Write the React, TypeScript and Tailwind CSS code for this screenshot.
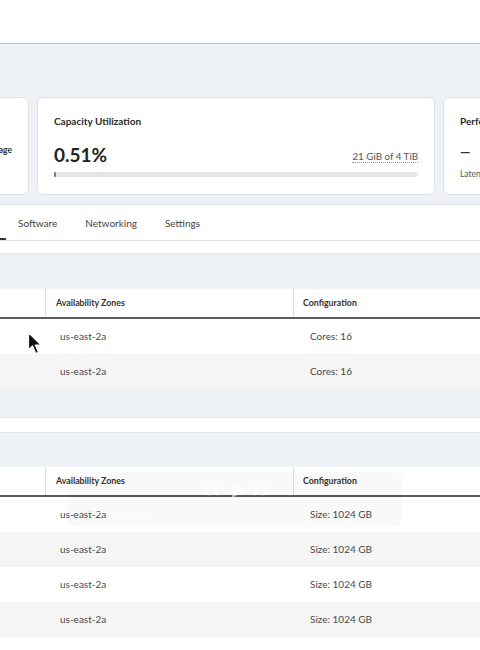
import React from "react";

const font = { fontFamily: "Lato, 'Noto Sans', sans-serif" };

function Cursor() {
  return (
    <svg
      className="absolute left-[27px] top-[331px]"
      width="16"
      height="25"
      viewBox="0 0 16 25"
    >
      <path
        d="M1.5 1.5 L1.5 19 L5.5 15 L8.8 22.5 L11.5 21.3 L8.3 14 L14 14 Z"
        fill="#111"
        stroke="#fff"
        strokeWidth="1.2"
        strokeLinejoin="round"
      />
    </svg>
  );
}

function TableHeader() {
  return (
    <div className="flex h-[30px] bg-white border-b-2 border-[#5b5b5b] text-[8.8px] font-bold text-[#333]">
      <div className="w-[45px] shrink-0" />
      <div className="w-[248px] shrink-0 border-l border-[#dedede] flex items-center pl-[10px]">
        Availability Zones
      </div>
      <div className="flex-1 border-l border-[#dedede] flex items-center pl-[9px]">
        Configuration
      </div>
    </div>
  );
}

function Row({ zone, config, striped }: { zone: string; config: string; striped: boolean }) {
  return (
    <div
      className={
        "flex h-[35px] items-center text-[10px] text-[#4a4a4a] " +
        (striped ? "bg-[#f5f5f5]" : "bg-white")
      }
    >
      <div className="w-[60px] shrink-0" />
      <div className="w-[250px] shrink-0">{zone}</div>
      <div className="flex-1">{config}</div>
    </div>
  );
}

export default function App() {
  return (
    <div className="relative w-[480px] h-[650px] overflow-hidden bg-white" style={font}>
      <div className="h-[43px] bg-white" />
      {/* summary area */}
      <div className="border-t border-[#c6c6c6] bg-[#eef1f5] pt-[53px] pb-[9px] overflow-hidden">
        <div className="flex gap-[8px] ml-[-369px]">
          <div className="w-[398px] h-[98px] shrink-0 rounded-[6px] bg-white border border-[#dfe2e6] flex items-center justify-end pr-[16px]">
            <span className="text-[8.5px] font-bold text-[#333] mt-[9px]">Storage</span>
          </div>
          <div className="w-[398px] h-[98px] shrink-0 rounded-[6px] bg-white border border-[#dfe2e6] px-[16px] pt-[16px] flex flex-col">
            <div className="text-[10px] font-bold text-[#2b2b2b] leading-[14px]">Capacity Utilization</div>
            <div className="flex items-end justify-between mt-[16px]">
              <div className="text-[19px] font-bold text-[#222] leading-[22px]">0.51%</div>
              <div className="text-[9.8px] text-[#555] leading-[12px] border-b border-dotted border-[#999] mb-[3px]">
                21 GiB of 4 TiB
              </div>
            </div>
            <div className="mt-[6px] h-[5px] rounded-full bg-[#e6e6e6] flex">
              <div className="w-[2px] h-full rounded-full bg-[#777]" />
            </div>
          </div>
          <div className="w-[398px] h-[98px] shrink-0 rounded-[6px] bg-white border border-[#dfe2e6] px-[16px] pt-[16px] flex flex-col">
            <div className="text-[10px] font-bold text-[#2b2b2b] leading-[14px]">Performance</div>
            <div className="mt-[16px] text-[13px] font-bold text-[#333] leading-[16px]">—</div>
            <div className="mt-[8px] text-[8.5px] text-[#555] leading-[12px]">Latency</div>
          </div>
        </div>
      </div>
      {/* tabs */}
      <div className="border-t border-[#dde0e4] h-[37px] bg-white border-b border-[#dcdcdc] flex items-end text-[10px] text-[#444]">
        <div className="w-[6px] h-[2px] bg-[#333]" />
        <div className="ml-[12px] h-full flex items-center pt-[2px]">Software</div>
        <div className="ml-[28px] h-full flex items-center pt-[2px]">Networking</div>
        <div className="ml-[28px] h-full flex items-center pt-[2px]">Settings</div>
      </div>
      <div className="h-[12px] bg-white" />
      {/* section 1 */}
      <div className="h-[36px] bg-[#eef1f5] border-t border-[#e3e6ea]" />
      <TableHeader />
      <Row zone="us-east-2a" config="Cores: 16" striped={false} />
      <Row zone="us-east-2a" config="Cores: 16" striped={true} />
      <div className="h-[29px] bg-[#eef1f5] border-b border-[#e3e6ea]" />
      <div className="h-[14px] bg-white" />
      {/* section 2 */}
      <div className="h-[35px] bg-[#eef1f5] border-t border-[#e3e6ea]" />
      <TableHeader />
      <Row zone="us-east-2a" config="Size: 1024 GB" striped={false} />
      <Row zone="us-east-2a" config="Size: 1024 GB" striped={true} />
      <Row zone="us-east-2a" config="Size: 1024 GB" striped={false} />
      <Row zone="us-east-2a" config="Size: 1024 GB" striped={true} />

      {/* faint video overlay */}
      <div className="absolute left-[68px] top-[472px] w-[334px] h-[55px] rounded-[8px] bg-black/[0.025]">
        <svg className="absolute left-[128px] top-[8px]" width="80" height="20" viewBox="0 0 80 20">
          <path d="M14 4 L6 10 L14 16 Z M22 4 L14 10 L22 16 Z" fill="#fff" opacity="0.5" />
          <path d="M36 2 L50 10 L36 18 Z" fill="#fff" opacity="0.6" />
          <path d="M58 4 L66 10 L58 16 Z M66 4 L74 10 L66 16 Z" fill="#fff" opacity="0.5" />
        </svg>
        <div className="absolute left-[17px] top-[40px] w-[62px] h-[1px] bg-white/70" />
      </div>
      <Cursor />
    </div>
  );
}
